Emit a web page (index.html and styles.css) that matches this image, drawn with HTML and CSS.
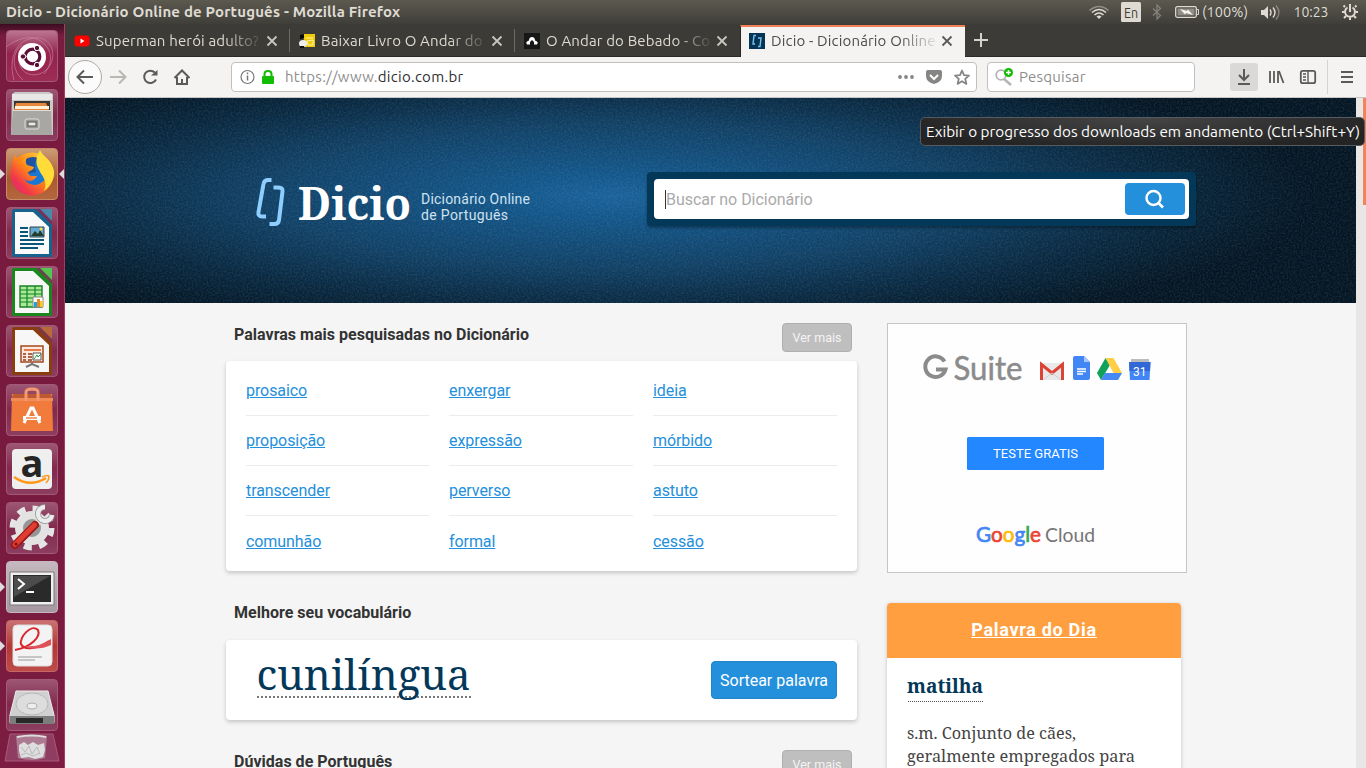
FILE: index.html
```html
<!DOCTYPE html>
<html lang="pt-BR">
<head>
<meta charset="utf-8">
<title>Dicio - Dicionário Online de Português</title>
<link rel="stylesheet" href="styles.css">
</head>
<body>
<header class="panel">
  <span class="panel-title">Dicio - Dicionário Online de Português - Mozilla Firefox</span>
  <svg class="tray" width="276" height="24" viewBox="1090 0 276 24">
    <g fill="none" stroke="#dfdbd2" stroke-width="1.6">
      <path d="M1089.500 10.500Q1099 2.500 1108.500 10.500" stroke="#918d84"/><path d="M1092 12.500Q1099 6.500 1106 12.500M1094.500 15Q1099 11 1103.500 15"/>
    </g>
    <path d="M1096.500 16.500Q1099 14.500 1101.500 16.500L1099 19z" fill="#dfdbd2"/>
    <rect x="1121" y="2" width="20" height="20" rx="1.500" fill="#dfdbd2"/>
    <text x="1131" y="17.500" text-anchor="middle" class="tray-text dark" textLength="14" lengthAdjust="spacingAndGlyphs">En</text>
    <path d="M1153 8.500L1160.500 15.500L1157 19V5L1160.500 8.500L1153 15.500" fill="none" stroke="#85827a" stroke-width="1.300"/>
    <rect x="1175.700" y="6.700" width="20.600" height="10.600" rx="1.500" fill="none" stroke="#dfdbd2" stroke-width="1.300"/>
    <rect x="1177.500" y="8.500" width="17" height="7" fill="#918e85"/><path d="M1197 9.500h1.500v5H1197" fill="none" stroke="#dfdbd2"/>
    <path d="M1180 9l7 2 1-1.500 5 5.500-7-2-1 1.500z" fill="#f5f3ef"/>
    <text x="1202" y="17" class="tray-text" textLength="46" lengthAdjust="spacingAndGlyphs">(100%)</text>
    <path d="M1261 10h3l4-4v13l-4-4h-3z" fill="#dfdbd2"/>
    <path d="M1270 9.500q2 3 0 6M1273 7.500q4 5 0 10" fill="none" stroke="#dfdbd2" stroke-width="1.400"/><path d="M1276 5.500q6 7 0 14" fill="none" stroke="#8c887f" stroke-width="1.400"/>
    <text x="1293.500" y="17" class="tray-text" textLength="35" lengthAdjust="spacingAndGlyphs">10:23</text>
    <g stroke="#dfdbd2" fill="none" transform="translate(1350 12)"><path d="M-2.500-4.500A5 5 0 1 0 2.500-4.500" stroke-width="2"/><path d="M0-8V0" stroke-width="2"/><path d="M5-5l1.500-1.500M-5-5l-1.500-1.500M5.500 0h2.500M-5.500 0H-8M4 4l2 2M-4 4l-2 2M0 5.500V8" stroke-width="2"/></g>
  </svg>
</header>

<div class="desktop">
<nav class="launcher">
  <div class="tile"><svg viewBox="0 0 52 52"><path d="M8 50C2 28 10 10 28 8s24 18 14 30-30 8-29-10M0 17C12 8 26 4 36 12s12 20 2 32M17 50C5 40 6 22 16 15" fill="none" stroke="#d18baa" stroke-opacity=".6"/><circle cx="26" cy="27" r="14" fill="#fff"/><circle cx="26.500" cy="26.500" r="7.300" fill="none" stroke="#5c0f35" stroke-width="3.200"/><g stroke="#fff" stroke-width="1.400"><path d="M20.500 26.500H17M29.500 21l2-3.500M29.500 32l2 3.500"/></g><g fill="#5c0f35" stroke="#fff"><circle cx="17" cy="26.500" r="2.700"/><circle cx="31" cy="18" r="2.700"/><circle cx="31" cy="35" r="2.700"/></g></svg></div>
  <div class="tile"><svg viewBox="0 0 52 52"><path d="M6 5l3-2h34l4 2v41H5z" fill="#c9c9c7"/><path d="M6 5h40v6H6z" fill="#e8e8e6"/><path d="M8 12h36v10H8z" fill="#393632"/><path d="M10 14h30l3 7H8z" fill="#e6873c"/><path d="M9 17h34v3H9z" fill="#fff1d7"/><path d="M7 21h38l1 25H5z" fill="#a8a7a4"/><path d="M7 21.500h38" stroke="#deded9"/><rect x="19" y="30" width="14" height="10" rx="2" fill="#989794" stroke="#dededb"/><rect x="22" y="33" width="8" height="4" fill="#e9e9e7" stroke="#555"/></svg></div>
  <div class="tile fox"><svg viewBox="0 0 52 52"><defs><linearGradient id="fx" x1="1" y1="0" x2=".1" y2="1"><stop stop-color="#fff14f"/><stop offset=".45" stop-color="#ff8a16"/><stop offset=".8" stop-color="#f33948"/><stop offset="1" stop-color="#d92086"/></linearGradient></defs><circle cx="26" cy="26" r="21.500" fill="url(#fx)"/><circle cx="27" cy="24" r="14" fill="#1878d4"/><path d="M18 12q7-5 14-2-5 5-2 14l-10 2z" fill="#20539e"/><path d="M5 20C6 14 7 11 9 7l5 7 7-5c-2 4-1 6 0 8l7 2c0 3-6 4-6 6 1 4 5 3 9 3-3 6-9 6-13 3 5 7 14 8 19 2-2 11-26 12-31-3z" fill="url(#fx)"/><path d="M34 2c3 7 12 10 14 21 1 8-4 16-10 20 3-7 1-11-2-16-4-7-9-13-2-25z" fill="#ffdc38"/></svg></div>
  <div class="tile"><svg viewBox="0 0 52 52"><path d="M8 2h38v46q0 2-2 2H8q-2 0-2-2V4q0-2 2-2z" fill="#17638d"/><path d="M30 2h16v16z" fill="#7d2f58"/><path d="M34 2h12v12z" fill="#488aac"/><path d="M9 5h18l16 15v27H9z" fill="#fafafa"/><path d="M14 21h8m-8 4h8m-8 4h8m-8 4h24m-24 4h24m-24 4h18" stroke="#075779" stroke-width="1.800"/><path d="M24 20h14v10H24z" fill="#63a9d0" stroke="#2c454d"/><path d="M25 29l4-5 3 3 2-4 4 6z" fill="#263c2c"/><circle cx="35" cy="22" r="1.500" fill="#ffd742"/></svg></div>
  <div class="tile"><svg viewBox="0 0 52 52"><path d="M8 2h38v46q0 2-2 2H8q-2 0-2-2V4q0-2 2-2z" fill="#19861e"/><path d="M30 2h16v16z" fill="#6f4150"/><path d="M34 2h12v12z" fill="#56c653"/><path d="M9 5h18l16 15v27H9z" fill="#f7f7f7"/><path d="M14 20h22v21H14z" fill="#a8e995" stroke="#178126" stroke-width="1.400"/><path d="M14 24h22M14 28h22M14 32h22M14 36h22M21 20v21M29 20v21" stroke="#178126" stroke-width="1.200"/><path d="M27 31h10v10H27z" fill="#fff" stroke="#888"/><path d="M28 36h3v5h-3z" fill="#16a5da"/><path d="M31 33h3v8h-3z" fill="#ef8424"/><path d="M34 35h3v6h-3z" fill="#f6c72b"/></svg></div>
  <div class="tile"><svg viewBox="0 0 52 52"><path d="M8 2h38v46q0 2-2 2H8q-2 0-2-2V4q0-2 2-2z" fill="#8a3e10"/><path d="M30 2h16v16z" fill="#7d3550"/><path d="M34 2h12v12z" fill="#b86a3b"/><path d="M9 5h18l16 15v27H9z" fill="#f7f7f7"/><path d="M15 21h22v16H15z" fill="#ffe8dd" stroke="#a4481c" stroke-width="1.500"/><path d="M18 24h17v2H18z" fill="#e77b48"/><path d="M17 29h3m-3 3h3m-3 3h3M22 29h4m-4 3h4m-4 3h4" stroke="#8f3a17" stroke-width="1.600"/><path d="M27 28h8v7h-8z" fill="#fff" stroke="#555"/><path d="M28 34l3-4 1 2 3-3" fill="none" stroke="#2a9735"/><path d="M26 37v2m-6 3l6-3 7 3" stroke="#777" stroke-width="2" fill="none"/></svg></div>
  <div class="tile"><svg viewBox="0 0 52 52"><path d="M6 10h40l1 37H5z" fill="#f17b3a"/><path d="M5 14l3-4h36l3 4z" fill="#bd5a31"/><path d="M5 14h42v3H5z" fill="#ee8b58"/><path d="M20 17V8q0-3 6-3t6 3v9" fill="none" stroke="#f39a71" stroke-width="3"/><path d="M18 39l7-15h2l7 15" fill="none" stroke="#fff" stroke-width="3"/><path d="M17 34h18" stroke="#fff" stroke-width="4"/><path d="M20 34h11" stroke="#ee7336" stroke-width="1.300"/></svg></div>
  <div class="tile"><svg viewBox="0 0 52 52"><rect x="6" y="6" width="40" height="40" rx="4" fill="#efefef"/><text x="26" y="34" text-anchor="middle" class="amazon">a</text><path d="M8 34q16 11 32 1" stroke="#ff9918" stroke-width="2.600" fill="none"/><path d="M36 34q7-3 7 0 0 3-3 6" stroke="#ff9918" stroke-width="1.700" fill="none"/></svg></div>
  <div class="tile"><svg viewBox="0 0 52 52"><circle cx="26" cy="26" r="19.500" fill="none" stroke="#e5e5e5" stroke-width="6" stroke-dasharray="8 7.315"/><circle cx="26" cy="26" r="13" fill="#969696" stroke="#e3e3e3" stroke-width="8"/><path d="M28 24l8-8" stroke="#e7e7e7" stroke-width="6"/><path d="M39 5a7 7 0 1 0 7 8" fill="none" stroke="#8f8f8f" stroke-width="6"/><path d="M39 5a7 7 0 1 0 7 8" fill="none" stroke="#ececec" stroke-width="4.500"/><path d="M9 43L29 23" stroke="#9c1919" stroke-width="8" stroke-linecap="round"/><path d="M9 42.500L28.500 23" stroke="#e13e33" stroke-width="5" stroke-linecap="round"/><circle cx="10" cy="42" r="1.500" fill="#7a1414"/></svg></div>
  <div class="tile term"><svg viewBox="0 0 52 52"><path d="M4 11h44v33H4z" fill="#f0f0f0" stroke="#777"/><path d="M7 14h38v27H7z" fill="#292a29"/><path d="M8 15h36L8 36z" fill="#4b4c4b"/><path d="M12 18l6 5-6 5M20 31h8" stroke="#fff" stroke-width="2" fill="none"/></svg></div>
  <div class="tile red"><svg viewBox="0 0 52 52"><rect x="7" y="5" width="39" height="41" rx="4" fill="#f3f3f3" stroke="#ddd"/><path d="M9 30C25 27 35 17 32 10 25 3 13 18 15 24c3 7 17 5 28-3" fill="none" stroke="#da252c" stroke-width="2"/><path d="M18 26q14 2 27-7v6q-10 5-23 3z" fill="#df5257"/><path d="M12 37h24M12 40h17" stroke="#999"/></svg></div>
  <div class="tile"><svg viewBox="0 0 52 52"><path d="M10 12h32l6 24v8H4v-8z" fill="#d0d0d0" stroke="#eee"/><path d="M4 37h44v8H4z" fill="#7d7d7d"/><path d="M10 39h27v5H10z" fill="#292929"/><ellipse cx="26" cy="25" rx="16" ry="11" fill="#dddddd" stroke="#b9b9b9"/><ellipse cx="26" cy="27" rx="5" ry="3" fill="#eee" stroke="#aaa"/></svg></div>
  <svg class="trash" width="58" height="30" viewBox="0 0 58 30"><path d="M7 1h43l6 27H2z" fill="#8f3e62" stroke="#a9587b"/><path d="M13 3h31l-2 22q-13 4-27 0z" fill="#ad7b91"/><path d="M14 4q15-3 29 0" stroke="#ddd" stroke-width="2" fill="none"/><path d="M16 12l5-3 4 3 5-3 5 3 6-2 1 7-2 7-8 2-6-2-8 1-2-7z" fill="#dedede"/><path d="M18 14l4 5 4-6 3 8 5-7 3 7M18 22l5-2 7 3 7-3" fill="none" stroke="#b9b9b9"/></svg>
  <span class="mark m1"></span><span class="mark m2"></span><span class="mark m3"></span><span class="mark right"></span>
</nav>

<div class="browser">
  <div class="tabs">
    <div class="tab"><svg width="16" height="16"><rect y="2.500" x=".500" width="15" height="11" rx="3" fill="#f00"/><path d="M6.500 5.500v5l4-2.500z" fill="#fff"/></svg><span class="label">Superman herói adulto?</span><svg class="close" width="12" height="12"><path d="M1.500 1.500l9 9m0-9l-9 9"/></svg></div>
    <div class="tab"><svg width="16" height="16"><path d="M4 1h12v13H6z" fill="#efcb09"/><path d="M1 2l4-1v4l-4 1z" fill="#090909"/><ellipse cx="4" cy="10.500" rx="4" ry="3.500" fill="#eee"/><path d="M1 14h4" stroke="#111" stroke-width="2"/><path d="M7 5h7M8 8l6-1v5H9z" stroke="#fff4b0" fill="none"/></svg><span class="label">Baixar Livro O Andar do</span><svg class="close" width="12" height="12"><path d="M1.500 1.500l9 9m0-9l-9 9"/></svg></div>
    <div class="tab"><svg width="16" height="16"><path d="M0 0h16v16H0z" fill="#171717"/><path d="M3 11.500q-2-3 2-4 0-3.500 3-3.500t3 3.500q4 1 2 4h-3V9L8 7 6 9v2.500z" fill="#fff"/></svg><span class="label">O Andar do Bebado - Com</span><svg class="close" width="12" height="12"><path d="M1.500 1.500l9 9m0-9l-9 9"/></svg></div>
    <div class="tab active"><svg width="16" height="16"><path d="M0 0h16v16H0z" fill="#063455"/><path d="M7 2.500H5L4 11h2M9 5h3l-1 8.500H9" fill="none" stroke="#79c1f2" stroke-width="1.400"/></svg><span class="label">Dicio - Dicionário Online</span><svg class="close" width="12" height="12"><path d="M1.500 1.500l9 9m0-9l-9 9"/></svg></div>
    <svg class="plus" width="32" height="33"><path d="M9 16h14m-7-7v14" stroke="#d6d3cb" stroke-width="2"/></svg>
  </div>
  <div class="toolbar">
    <svg class="nav-icons" width="166" height="40" viewBox="65 57 166 40" fill="none" stroke="#5a5a58" stroke-width="2"><circle cx="85" cy="77" r="16.500" fill="#fbfbfb" stroke="#acaaa6" stroke-width="1"/><path d="M93 77H78m6-6.500L77.500 77l6.500 6.500"/><path d="M110 77h15m-6-6.500l6.500 6.500-6.500 6.500" stroke="#b9b7b4"/><path d="M156 79.500a6.200 6.200 0 1 1-1.200-7"/><path d="M151 75.500h6.500V70z" fill="#5a5a58" stroke="none"/><path d="M174.500 78l7.500-7.500 7.500 7.500M177 77v7h10v-7"/><path d="M182 84v-5"/></svg>
    <div class="url">
      <svg width="46" height="28" viewBox="232 63 46 28"><circle cx="247.500" cy="77" r="6.500" fill="none" stroke="#777" stroke-width="1.200"/><path d="M247.500 75.500v5m0-8v1.700" stroke="#777" stroke-width="1.500"/><rect x="262" y="76" width="12" height="8" rx="1" fill="#12bc00"/><path d="M264.500 77v-3q0-3 3.500-3t3.500 3v3" fill="none" stroke="#12bc00" stroke-width="2"/></svg>
      <span class="address">https://www.<b>dicio.com.br</b></span>
      <svg class="actions" width="82" height="28" viewBox="894 63 82 28"><g fill="#858583"><circle cx="900" cy="77" r="1.900"/><circle cx="906" cy="77" r="1.900"/><circle cx="912" cy="77" r="1.900"/><path d="M928 70h12q2 0 2 2v4q0 6-8 8-8-2-8-8v-4q0-2 2-2z"/></g><path d="M930 75l4 4 4-4" fill="none" stroke="#fff" stroke-width="2"/><path d="M962 70.500l2 4.700 5 .400-3.800 3.300 1.200 5-4.400-2.700-4.400 2.700 1.200-5-3.800-3.300 5-.400z" fill="none" stroke="#858583" stroke-width="1.800" stroke-linejoin="round"/></svg>
    </div>
    <div class="search"><svg width="31" height="28" viewBox="988 63 31 28"><circle cx="1001" cy="75" r="4.800" fill="none" stroke="#b4b4b4" stroke-width="1.800"/><path d="M1004 79l7 6" stroke="#b4b4b4" stroke-width="2.500"/><circle cx="1008.500" cy="72.500" r="4.500" fill="#12bc00"/><path d="M1006 72.500h5m-2.500-2.500v5" stroke="#fff" stroke-width="1.400"/></svg><span>Pesquisar</span></div>
    <svg class="tools" width="136" height="40" viewBox="1230 57 136 40" fill="none" stroke="#5a5a58" stroke-width="2"><rect x="1230" y="63" width="28" height="28" rx="3" fill="#dad9d7" stroke="none"/><path d="M1244 69v11m-5-5l5 5 5-5M1238 84h12"/><path d="M1270 71v12m4-12v12m4-12v12m1-12l4.500 12" stroke-width="1.800"/><rect x="1300.800" y="70.800" width="14.400" height="12.400" rx="2" stroke-width="1.800"/><path d="M1308 71v12M1303 74h3m-3 3h3m-3 3h3" stroke-width="1.400"/><path d="M1327.500 60v34" stroke="#d5d3d1" stroke-width="1"/><path d="M1341 72h12m-12 5h12m-12 5h12"/></svg>
  </div>

  <div class="viewport">
    <main class="page">
      <section class="hero">
        <svg class="grain" width="1291" height="205"><filter id="noise"><feTurbulence type="fractalNoise" baseFrequency=".55" numOctaves="2" seed="4"/><feColorMatrix values="0 0 0 0 .5 0 0 0 0 .65 0 0 0 0 .75 .8 0 0 0 -.28"/></filter><rect width="1291" height="205" filter="url(#noise)"/></svg>
        <svg class="logo" width="300" height="60" viewBox="250 170 300 60"><path d="M271.500 180h-3q-4.500 0-5 4l-5 28q-.700 4.500 3.500 4.500h4M273.500 187.500h5q4.500 0 4 4l-3.500 28.500q-.500 4-4.500 4h-5" fill="none" stroke="#8dceff" stroke-width="4"/><text x="298" y="220" class="brand" textLength="113" lengthAdjust="spacingAndGlyphs">Dicio</text><text x="421" y="204" class="tagline" textLength="109">Dicionário Online</text><text x="421" y="220" class="tagline" textLength="87">de Português</text></svg>
        <div class="query"><div class="field"><span class="placeholder">Buscar no Dicionário</span><button class="go"><svg width="24" height="24"><circle cx="10.500" cy="11" r="7" fill="none" stroke="#fff" stroke-width="2.400"/><path d="M15.500 16l4.500 4.500" stroke="#fff" stroke-width="2.600"/></svg></button></div></div>
      </section>
      <div class="columns">
        <div class="left">
          <div class="head"><h2>Palavras mais pesquisadas no Dicionário</h2><a class="more">Ver mais</a></div>
          <div class="card words">
            <p><a>prosaico</a></p><p><a>enxergar</a></p><p><a>ideia</a></p>
            <p><a>proposição</a></p><p><a>expressão</a></p><p><a>mórbido</a></p>
            <p><a>transcender</a></p><p><a>perverso</a></p><p><a>astuto</a></p>
            <p><a>comunhão</a></p><p><a>formal</a></p><p><a>cessão</a></p>
          </div>
          <div class="head second"><h2>Melhore seu vocabulário</h2></div>
          <div class="card vocab"><svg width="216" height="60" viewBox="256 650 216 60"><path d="M257 697h214" stroke="#777" stroke-width="2" stroke-dasharray="2 2"/><text x="256.500" y="690" class="big-word" textLength="214" lengthAdjust="spacingAndGlyphs">cunilíngua</text></svg><button class="draw">Sortear palavra</button></div>
          <div class="head third"><h2>Dúvidas de Português</h2><a class="more">Ver mais</a></div>
        </div>
        <aside class="right">
          <svg class="ad" width="300" height="250" viewBox="887 323 300 250"><rect x="887.500" y="323.500" width="299" height="249" fill="#fefefe" stroke="#c5c5c5"/>
            <path d="M944.500 361.500a10.300 10.300 0 1 0 1 8h-9.500" fill="none" stroke="#8b8b8b" stroke-width="4"/><text x="953.500" y="380" class="suite" textLength="69" lengthAdjust="spacingAndGlyphs">Suite</text>
            <path d="M1040 363h24v17h-24z" fill="#e9e9e9"/><path d="M1041.500 380v-15.500l10.500 8.500 10.500-8.500V380" fill="none" stroke="#db4437" stroke-width="3"/><path d="M1043 380l9-7 9 7" fill="none" stroke="#d0d0d0"/>
            <path d="M1073 358q0-2 2-2h9l6 6v16q0 2-2 2h-13q-2 0-2-2z" fill="#4285f4"/><path d="M1084 356l6 6h-6z" fill="#a8c7fa"/><path d="M1077 369h9m-9 2.500h9m-9 2.500h6" stroke="#fff" stroke-width="1.300"/>
            <path d="M1105.500 358l4.500 7-9 15-4-7z" fill="#12a15b"/><path d="M1105.500 358h8l8.500 15h-8.500z" fill="#ffce44"/><path d="M1105 373h17l-4 7h-17z" fill="#4688f4"/>
            <path d="M1131 359h18v5h-18z" fill="#bcbcbc"/><path d="M1129 362h21.500l-1 18h-19.500z" fill="#4285f4"/><path d="M1129 362h21.500l-.500 9h-20.500z" fill="#3267d6"/><text x="1139.700" y="376" class="cal" text-anchor="middle">31</text>
            <rect x="967" y="437" width="137" height="33" rx="1.500" fill="#2388ff"/><text x="993" y="458" class="try" textLength="85">TESTE GRATIS</text>
            <text x="976" y="541.500" class="google" textLength="65" lengthAdjust="spacingAndGlyphs"><tspan fill="#4285f4" stroke="#4285f4">G</tspan><tspan fill="#ea4335" stroke="#ea4335">o</tspan><tspan fill="#fbbc05" stroke="#fbbc05">o</tspan><tspan fill="#4285f4" stroke="#4285f4">g</tspan><tspan fill="#34a853" stroke="#34a853">l</tspan><tspan fill="#ea4335" stroke="#ea4335">e</tspan></text><text x="1045" y="541.500" class="cloud" textLength="50" lengthAdjust="spacingAndGlyphs">Cloud</text>
          </svg>
          <div class="daily"><h3><a>Palavra do Dia</a></h3><svg width="274" height="110" viewBox="907 658 274 110"><text x="907" y="693" class="day-word" textLength="76" lengthAdjust="spacingAndGlyphs">matilha</text><path d="M908 701.500h75" stroke="#555" stroke-dasharray="1 1"/><text x="907" y="739" class="meaning" textLength="169" lengthAdjust="spacingAndGlyphs">s.m. Conjunto de cães,</text><text x="907" y="762" class="meaning" textLength="228" lengthAdjust="spacingAndGlyphs">geralmente empregados para</text></svg></div>
        </aside>
      </div>
    </main>
    <div class="scroll"><div class="thumb"></div></div>
  </div>
</div>
</div>
<div class="tip"><svg width="436" height="24"><text x="0" y="17" textLength="434" lengthAdjust="spacingAndGlyphs">Exibir o progresso dos downloads em andamento (Ctrl+Shift+Y)</text></svg></div>
</body>
</html>
```

FILE: styles.css
```css
* { box-sizing: border-box; }
body { margin: 0; width: 1366px; height: 768px; overflow: hidden; font-family: Roboto, sans-serif; background: #f5f5f5; position: relative; }
svg { display: block; flex: none; }
h2, h3, p { margin: 0; }
.panel { height: 24px; background: linear-gradient(#5c594f, #3f3e39); display: flex; align-items: center; justify-content: space-between; font-family: Ubuntu, "Noto Sans", sans-serif; color: #dfdbd2; }
.panel-title { padding-left: 6px; font-size: 15px; font-weight: 700; letter-spacing: .17px; line-height: 24px; white-space: nowrap; }
.tray { overflow: visible; }
.tray-text { font-size: 15px; fill: #dfdbd2; }
.tray-text.dark { fill: #3c3b37; font-size: 15px; }
.desktop { display: flex; height: 744px; }
.launcher { width: 65px; flex: none; padding: 6px 6px 0; background: linear-gradient(#3c0c20, #791c3f 12px, #771a3e 50%, #7b1c40); border-right: 1px solid #a63b5f; position: relative; display: flex; flex-direction: column; gap: 7px; }
.tile { width: 52px; height: 52px; flex: none; border-radius: 4px; border: 1px solid #a25a78; background: linear-gradient(#9c5673, #80294b 50%, #8d3e60); }
.tile svg { width: 52px; height: 52px; margin: -1px; }
.tile:first-child { background: linear-gradient(#ba7590, #94234b 45%, #9d2d55); }
.tile.fox { background: linear-gradient(#cb9c77, #a9592f 60%, #b4673e); border-color: #c78c66; }
.tile.term { background: linear-gradient(#c5b9bf, #a598a0); border-color: #c5b8c0; }
.tile.red { background: linear-gradient(#ca7272, #b23737 50%, #bd4c48); border-color: #c86666; }
.trash { margin: -5px 0 0 -3px; }
.amazon { font: 700 38px/1 "Open Sans", sans-serif; fill: #252525; }
.mark { position: absolute; left: 0; border: 5px solid transparent; border-left-color: #ddd; border-right-width: 0; }
.m1 { top: 145px; } .m2 { top: 558px; } .m3 { top: 617px; }
.mark.right { left: auto; right: 0; top: 145px; border-left-width: 0; border-right: 5px solid #ddd; }
.browser { flex: 1; min-width: 0; display: flex; flex-direction: column; }
.tabs { height: 33px; display: flex; background: #3c3b37; font-family: Ubuntu, "Noto Sans", sans-serif; border-bottom: 1px solid #2b2a27; }
.tab { width: 225px; height: 32px; padding: 1px 12px 0 9px; display: flex; align-items: center; color: #dfdbd2; font-size: 15px; background: linear-gradient(#6d6b65, #6d6b65) right 5px / 1px 23px no-repeat; }
.tab:nth-child(3) { background: none; }
.label { width: 165px; margin-left: 6px; margin-right: 5px; overflow: hidden; white-space: nowrap; line-height: 24px; letter-spacing: .15px; -webkit-mask-image: linear-gradient(90deg, #000 78%, transparent 102%); mask-image: linear-gradient(90deg, #000 78%, transparent 102%); }
.close { stroke: #c9c6be; stroke-width: 1.8; }
.tab.active { height: 32px; margin-top: 1px; background: #f4f3f2; color: #4c4c4c; border-top: 2px solid #f28057; border-left: 1px solid #282724; padding: 0 12px 2px 8px; }
.active .close { stroke: #5b5a57; }
.toolbar { height: 41px; display: flex; align-items: flex-start; background: #f4f3f2; border-bottom: 1px solid #c8c6c4; font-family: Ubuntu, "Noto Sans", sans-serif; font-size: 15px; }
.url, .search { height: 30px; margin-top: 5px; border: 1px solid #c2c0bd; border-radius: 4px; background: #fff; display: flex; align-items: center; line-height: 28px; }
.url { width: 746px; }
.address { margin-left: 7px; color: #8d8d8d; letter-spacing: .3px; }
.address b { font-weight: 400; color: #2f2f2f; }
.actions { margin-left: auto; }
.search { width: 208px; margin-left: 10px; color: #8d8d8d; letter-spacing: .25px; }
.tools { margin-left: 35px; }
.viewport { height: 670px; display: flex; }
.page { width: 1291px; background: #f5f5f5; overflow: hidden; }
.scroll { width: 10px; padding-left: 7px; background: #e8e7e6; }
.thumb { height: 107px; background: #f1845a; }
.hero { height: 205px; display: flex; padding: 72px 160px 0 185px; position: relative; background: radial-gradient(ellipse 700px 142px at 548px 98px, #19629a 0, #12568a 15%, #104065 50%, #08263d 78%, #031523 100%); }
.grain { position: absolute; left: 0; top: 0; opacity: .3; }
.logo { position: relative; }
.brand { font: 700 45px "Noto Serif", "Liberation Serif", serif; fill: #fff; }
.tagline { font-size: 14px; fill: #cfe2ef; }
.query { position: relative; width: 549px; height: 54px; margin: 2px 0 0 97px; padding: 7px; border-radius: 4px; background: #043859; box-shadow: 0 2px 3px #0005; }
.field { height: 40px; padding: 4px; padding-left: 12px; display: flex; align-items: center; justify-content: space-between; background: #fff; border-radius: 4px; }
.placeholder { color: #aaa; font-size: 16px; line-height: 19px; letter-spacing: -.03px; box-shadow: -1px 0 #333; }
.go { width: 60px; height: 32px; padding: 0; border: 0; border-radius: 4px; background: #2490dc; display: flex; align-items: center; justify-content: center; }
.columns { display: flex; gap: 30px; padding: 20px 0 0 161px; }
.left { width: 631px; }
.head { height: 38px; display: flex; justify-content: space-between; padding: 0 5px 0 8px; }
.head h2 { font-size: 16px; line-height: 23px; font-weight: 700; color: #333; letter-spacing: .02px; }
.more { width: 70px; height: 29px; text-align: center; font-size: 12.5px; line-height: 28px; border: 1px solid #afafaf; border-radius: 4px; background: #bfbfbf; color: #f4f4f4; }
.card { background: #fff; border-radius: 4px; box-shadow: 0 2px 4px #0003; }
.words { height: 210px; padding: 5px 20px; display: grid; grid-template-columns: 183px 184px 184px; grid-template-rows: repeat(4, 50px); column-gap: 20px; }
.words p { border-bottom: 1px solid #ececec; line-height: 49px; font-size: 16px; letter-spacing: -.07px; }
.words p:nth-child(n+10) { border: 0; padding-top: 1px; }
.words a { color: #2490dc; text-decoration: underline; }
.second { margin-top: 30px; height: 39px; }
.vocab { height: 80px; padding: 10px 20px 0 30px; display: flex; justify-content: space-between; align-items: flex-start; }
.big-word { font: 42px "Noto Serif", "DejaVu Serif Condensed", "DejaVu Serif", serif; fill: #043859; }
.draw { width: 126px; height: 38px; padding: 0; margin-top: 11px; background: #2490dc; border: 1px solid #2185cc; border-radius: 4px; color: #fff; font: 16px Roboto, sans-serif; }
.third { margin-top: 30px; }
.right { width: 300px; }
.suite { font: 32px Lato, sans-serif; fill: #8b8b8b; stroke: #8b8b8b; stroke-width: .5px; }
.cal { font-size: 12px; fill: #fff; }
.try { font-size: 13px; fill: #fff; }
.google { font: 21px Lato, sans-serif; stroke-width: .7px; }
.cloud { font: 20px Lato, sans-serif; fill: #757575; }
.daily { width: 294px; height: 200px; margin-top: 30px; background: #fff; border-radius: 4px; box-shadow: 0 1px 4px #0003; display: flex; flex-direction: column; }
.daily svg { align-self: flex-end; }
.daily h3 { align-self: stretch; height: 55px; border-radius: 4px 4px 0 0; background: #ff9f40; color: #fff; text-align: center; font-size: 18px; line-height: 54px; letter-spacing: .7px; text-decoration: underline; }
.day-word { font: 700 20px "Noto Serif", "DejaVu Serif Condensed", "DejaVu Serif", serif; fill: #043859; }
.meaning { font: 16px "Noto Serif", "DejaVu Serif Condensed", "DejaVu Serif", serif; fill: #444; }
.tip { position: absolute; left: 920px; top: 117px; width: 445px; height: 29px; padding: 2px 5px; border: 1px solid #555b5f; border-radius: 5px; background: radial-gradient(ellipse at 50% 0, #464646, #242424 80%); }
.tip text { font: 15px Ubuntu, "Noto Sans", sans-serif; fill: #fff; }
```
